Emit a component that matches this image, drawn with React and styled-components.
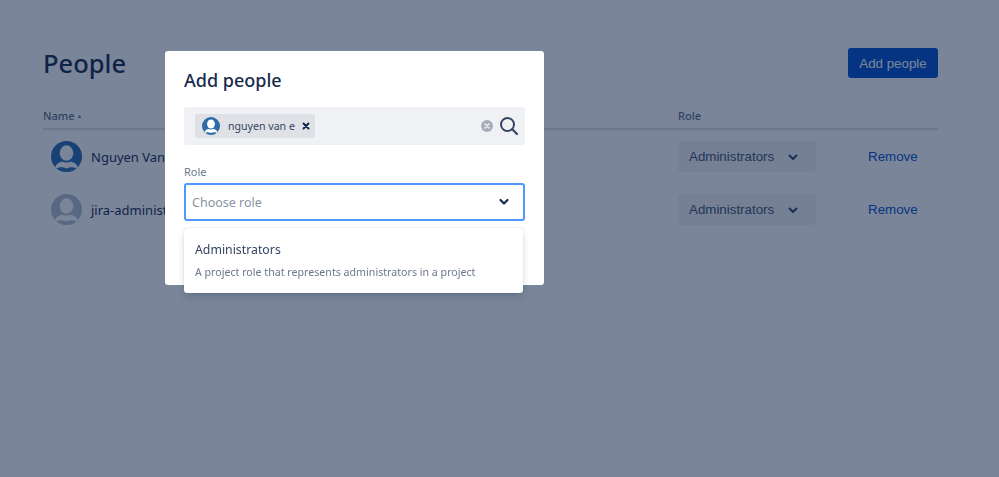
import styled, { createGlobalStyle } from 'styled-components';

const GlobalStyle = createGlobalStyle`
    html, body {
        margin: 0;
        height: 100%;
        background: #fff;
    }
    body {
        font-family: "Noto Sans", sans-serif;
        color: #172b4d;
    }
`;

const Page = styled.div`
    height: 477px;
    box-sizing: border-box;
    padding: 48px 61px 0 43px;
`;

const Header = styled.div`
    display: flex;
    justify-content: space-between;
    align-items: flex-start;
    height: 56px;
`;

const Title = styled.h1`
    margin: 0;
    font-size: 25.5px;
    line-height: 30px;
    font-weight: 500;
    color: #172b4d;
`;

const PrimaryButton = styled.button`
    width: 90px;
    height: 30px;
    padding: 0;
    border: 0;
    border-radius: 3px;
    background: #0052cc;
    color: #fff;
    font: 13.33px "Liberation Sans", sans-serif;
`;

const Row = styled.div`
    display: grid;
    grid-template-columns: 635px 190px 1fr;
    align-items: center;
`;

const HeadRow = styled(Row)`
    height: 22px;
    padding-bottom: 2px;
    border-bottom: 2px solid #dfe1e6;
    font-size: 11px;
    font-weight: 500;
    color: #5e6c84;
`;

const Rows = styled.div`
    display: flex;
    flex-direction: column;
    gap: 22px;
    padding-top: 11px;
`;

const BodyRow = styled(Row)`
    height: 31px;
`;

const SortMark = styled.span`
    margin-left: 2px;
    font-size: 6px;
    vertical-align: 2px;
    color: #7a869a;
`;

const Person = styled.div`
    display: flex;
    align-items: center;
    gap: 9px;
    padding-left: 8px;
    font-size: 13px;
`;

const Avatar = styled.svg`
    display: block;
    flex: none;
    width: ${(p) => p.$size}px;
    height: ${(p) => p.$size}px;
`;

const RoleSelect = styled.div`
    width: 138px;
    height: 31px;
    box-sizing: border-box;
    padding-left: 11px;
    display: flex;
    align-items: center;
    border-radius: 3px;
    background: #f4f5f7;
    font: 13.33px "Liberation Sans", sans-serif;
    color: #42526e;
`;

const RoleChevron = styled.svg`
    width: 16px;
    height: 16px;
    margin-left: 11px;
`;

const RemoveLink = styled.a`
    justify-self: start;
    font: 13.33px "Liberation Sans", sans-serif;
    color: #0052cc;
`;

const Overlay = styled.div`
    position: fixed;
    inset: 0;
    background: rgba(9, 30, 66, 0.54);
`;

const Modal = styled.div`
    position: absolute;
    left: 165px;
    top: 51px;
    width: 379px;
    height: 234px;
    box-sizing: border-box;
    padding: 16px 19px 0;
    border-radius: 3px;
    background: #fff;
`;

const ModalTitle = styled.h2`
    margin: 0 0 14px;
    font-size: 18px;
    line-height: 26px;
    font-weight: 500;
    color: #172b4d;
`;

const SearchField = styled.div`
    width: 341px;
    height: 38px;
    box-sizing: border-box;
    padding: 0 6px 0 11px;
    display: flex;
    align-items: center;
    border-radius: 3px;
    background: #f0f1f4;
`;

const Chip = styled.div`
    width: 120px;
    height: 24px;
    box-sizing: border-box;
    padding-left: 7px;
    display: flex;
    align-items: center;
    border-radius: 2px;
    background: #dfe1e6;
    font-size: 10.6px;
    color: #344563;
`;

const ChipText = styled.span`
    margin-left: 8px;
`;

const ChipClose = styled.svg`
    width: 8px;
    height: 8px;
    margin-left: 7px;
`;

const Spacer = styled.div`
    flex: 1;
`;

const ClearIcon = styled.svg`
    width: 12px;
    height: 12px;
`;

const SearchIcon = styled.svg`
    width: 20px;
    height: 20px;
    margin-left: 6px;
`;

const FieldLabel = styled.div`
    margin-top: 19px;
    font-size: 11px;
    line-height: 16px;
    color: #6b778c;
`;

const ChooseBox = styled.div`
    width: 341px;
    height: 38px;
    margin-top: 3px;
    box-sizing: border-box;
    padding: 0 13px 0 6px;
    display: flex;
    justify-content: space-between;
    align-items: center;
    border: 2px solid #4c9aff;
    border-radius: 3px;
    font-size: 12.5px;
    color: #8993a4;
`;

const Menu = styled.div`
    position: absolute;
    left: 19px;
    top: 177px;
    width: 339px;
    height: 65px;
    box-sizing: border-box;
    padding: 13px 11px 0;
    border-radius: 3px;
    background: #fff;
    box-shadow: 0 4px 8px -2px rgba(9, 30, 66, 0.25), 0 0 1px rgba(9, 30, 66, 0.31);
`;

const MenuTitle = styled.div`
    font-size: 12.3px;
    line-height: 18px;
    color: #344563;
`;

const MenuText = styled.div`
    margin-top: 5px;
    font-size: 10.65px;
    line-height: 16px;
    color: #6b778c;
`;

const UserIcon = ({ size, bg, id }) => (
    <Avatar $size={size} viewBox="0 0 32 32">
        <defs>
            <clipPath id={id}>
                <circle cx="16" cy="16" r="16" />
            </clipPath>
        </defs>
        <circle cx="16" cy="16" r="16" fill={bg} />
        <g clipPath={`url(#${id})`}>
            <ellipse cx="16" cy="12.500" rx="7" ry="8" fill="#fff" />
            <path d="M4 28c1-4 4.500-6.500 8-6.500 2 1 6 1 8 0 3.500 0 7 2.500 8 6.500v5H4z" fill="#fff" />
            <path d="M6 33v-5c3-1.500 7-1 10 .5 3-1.500 7-2 10-.5v5z" fill={bg} />
        </g>
    </Avatar>
);

const Chevron = ({ color }) => (
    <RoleChevron viewBox="0 0 16 16">
        <path d="M4.500 6.500 8 10l3.500-3.500" fill="none" stroke={color} strokeWidth="2" strokeLinecap="round" strokeLinejoin="round" />
    </RoleChevron>
);

// names are cut off by the modal in the screenshot, only the visible part is known
const people = [
    { name: 'Nguyen Van', color: '#2a6cb0', id: 'av1' },
    { name: 'jira-administ', color: '#b8bfcc', id: 'av2' },
];

const App = () => {
    return (
        <>
            <GlobalStyle />
            <Page>
                <Header>
                    <Title>People</Title>
                    <PrimaryButton>Add people</PrimaryButton>
                </Header>
                <HeadRow>
                    <span>Name<SortMark>▲</SortMark></span>
                    <span>Role</span>
                </HeadRow>
                <Rows>
                    {people.map((person) => (
                        <BodyRow key={person.name}>
                            <Person>
                                <UserIcon size={31} bg={person.color} id={person.id} />
                                {person.name}
                            </Person>
                            <RoleSelect>
                                Administrators
                                <Chevron color="#344563" />
                            </RoleSelect>
                            <RemoveLink>Remove</RemoveLink>
                        </BodyRow>
                    ))}
                </Rows>
            </Page>
            <Overlay>
                <Modal>
                    <ModalTitle>Add people</ModalTitle>
                    <SearchField>
                        <Chip>
                            <UserIcon size={18} bg="#2c6aa8" id="av3" />
                            <ChipText>nguyen van e</ChipText>
                            <ChipClose viewBox="0 0 8 8">
                                <path d="M1.500 1.500l5 5m0-5l-5 5" stroke="#091e42" strokeWidth="1.800" strokeLinecap="round" />
                            </ChipClose>
                        </Chip>
                        <Spacer />
                        <ClearIcon viewBox="0 0 12 12">
                            <circle cx="6" cy="6" r="6" fill="#a5adba" />
                            <path d="M4 4l4 4m0-4l-4 4" stroke="#f0f1f4" strokeWidth="1.500" strokeLinecap="round" />
                        </ClearIcon>
                        <SearchIcon viewBox="0 0 20 20">
                            <circle cx="8.500" cy="8.500" r="6.500" fill="none" stroke="#344563" strokeWidth="2" />
                            <path d="M13.300 13.300L18 18" stroke="#344563" strokeWidth="2.200" strokeLinecap="round" />
                        </SearchIcon>
                    </SearchField>
                    <FieldLabel>Role</FieldLabel>
                    <ChooseBox>
                        Choose role
                        <svg width="12" height="12" viewBox="0 0 12 12">
                            <path d="M2.500 4 6 7.500 9.500 4" fill="none" stroke="#172b4d" strokeWidth="2.200" strokeLinecap="round" strokeLinejoin="round" />
                        </svg>
                    </ChooseBox>
                    <Menu>
                        <MenuTitle>Administrators</MenuTitle>
                        <MenuText>A project role that represents administrators in a project</MenuText>
                    </Menu>
                </Modal>
            </Overlay>
        </>
    );
};

export default App;
